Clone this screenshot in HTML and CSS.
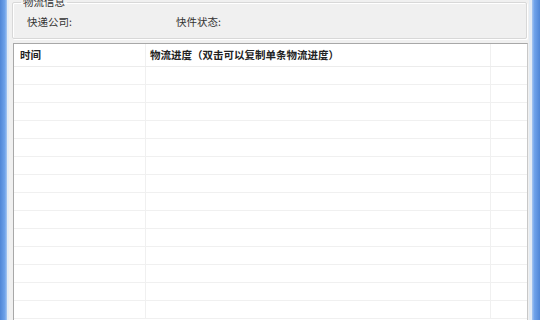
FILE: index.html
```html
<!DOCTYPE html>
<html>
<head>
<meta charset="utf-8">
<link rel="stylesheet" href="styles.css">
</head>
<body>
<div class="window">
  <div class="edge edge-left"></div>
  <div class="client">
    <fieldset class="group">
      <legend class="group-title">物流信息</legend>
      <div class="info-row">
        <span class="field field-company">快递公司:</span>
        <span class="field">快件状态:</span>
      </div>
    </fieldset>
    <div class="list">
      <div class="row head">
        <div class="cell c1">时间</div>
        <div class="cell c2">物流进度（双击可以复制单条物流进度）</div>
        <div class="cell c3"></div>
      </div>
      <div class="row"><div class="cell c1"></div><div class="cell c2"></div><div class="cell c3"></div></div>
      <div class="row"><div class="cell c1"></div><div class="cell c2"></div><div class="cell c3"></div></div>
      <div class="row"><div class="cell c1"></div><div class="cell c2"></div><div class="cell c3"></div></div>
      <div class="row"><div class="cell c1"></div><div class="cell c2"></div><div class="cell c3"></div></div>
      <div class="row"><div class="cell c1"></div><div class="cell c2"></div><div class="cell c3"></div></div>
      <div class="row"><div class="cell c1"></div><div class="cell c2"></div><div class="cell c3"></div></div>
      <div class="row"><div class="cell c1"></div><div class="cell c2"></div><div class="cell c3"></div></div>
      <div class="row"><div class="cell c1"></div><div class="cell c2"></div><div class="cell c3"></div></div>
      <div class="row"><div class="cell c1"></div><div class="cell c2"></div><div class="cell c3"></div></div>
      <div class="row"><div class="cell c1"></div><div class="cell c2"></div><div class="cell c3"></div></div>
      <div class="row"><div class="cell c1"></div><div class="cell c2"></div><div class="cell c3"></div></div>
      <div class="row"><div class="cell c1"></div><div class="cell c2"></div><div class="cell c3"></div></div>
      <div class="row"><div class="cell c1"></div><div class="cell c2"></div><div class="cell c3"></div></div>
      <div class="row"><div class="cell c1"></div><div class="cell c2"></div><div class="cell c3"></div></div>
    </div>
  </div>
  <div class="edge edge-right"></div>
</div>
</body>
</html>
```
FILE: styles.css
```css
html, body {
  margin: 0;
  padding: 0;
  width: 540px;
  height: 320px;
  overflow: hidden;
  background: #f0f0f0;
  font-family: "Noto Sans CJK SC", "Microsoft YaHei", sans-serif;
  font-size: 10.5px;
  color: #222;
}
.window {
  display: flex;
  height: 320px;
}
.edge-left {
  width: 7px;
  flex: none;
  background: linear-gradient(to right, #4f86d6, #6fa3ea 70%, #a9c8f0);
  border-right: 2px solid #e4ecf4;
}
.edge-right {
  flex: none;
  background: linear-gradient(to right, #a9c8f0, #6fa3ea 30%, #4f86d6);
  border-left: 3px solid #e4ecf4;
  box-sizing: border-box;
  width: 11px;
}
.client {
  flex: 1;
  display: flex;
  flex-direction: column;
  padding: 0 0 0 3px;
  margin-top: -4px;
}
.group {
  margin: 0 2px 0 0;
  padding: 0 0 0 14px;
  height: 43px;
  flex: none;
  box-sizing: border-box;
  border: 1px solid #d8d8d8;
  border-radius: 2px;
  box-shadow: inset 1px 1px 0 #fff, 1px 1px 0 #fff;
}
.group-title {
  padding: 0 2px;
  margin-left: -6px;
  line-height: 12px;
  color: #333;
}
.info-row {
  display: flex;
  padding-top: 7px;
  line-height: 14px;
  color: #333;
}
.field-company {
  width: 149px;
}
.list {
  margin: 4px 1px 0 1px;
  flex: 1;
  background: #fff;
  border: 1px solid #a8a8a8;
  border-right-color: #c8c8c8;
  border-bottom: none;
}
.row {
  display: flex;
  height: 17px;
  border-bottom: 1px solid #f0f0f0;
}
.row.head {
  height: 22px;
  border-bottom: 1px solid #ececec;
  font-weight: 700;
  color: #222;
}
.cell {
  box-sizing: border-box;
  padding-left: 5px;
  line-height: 22px;
  white-space: nowrap;
  border-right: 1px solid #f0f0f0;
}
.c1 { width: 132px; padding-left: 6px; }
.c2 { width: 345px; padding-left: 4px; }
.c3 { flex: 1; border-right: none; }
```
